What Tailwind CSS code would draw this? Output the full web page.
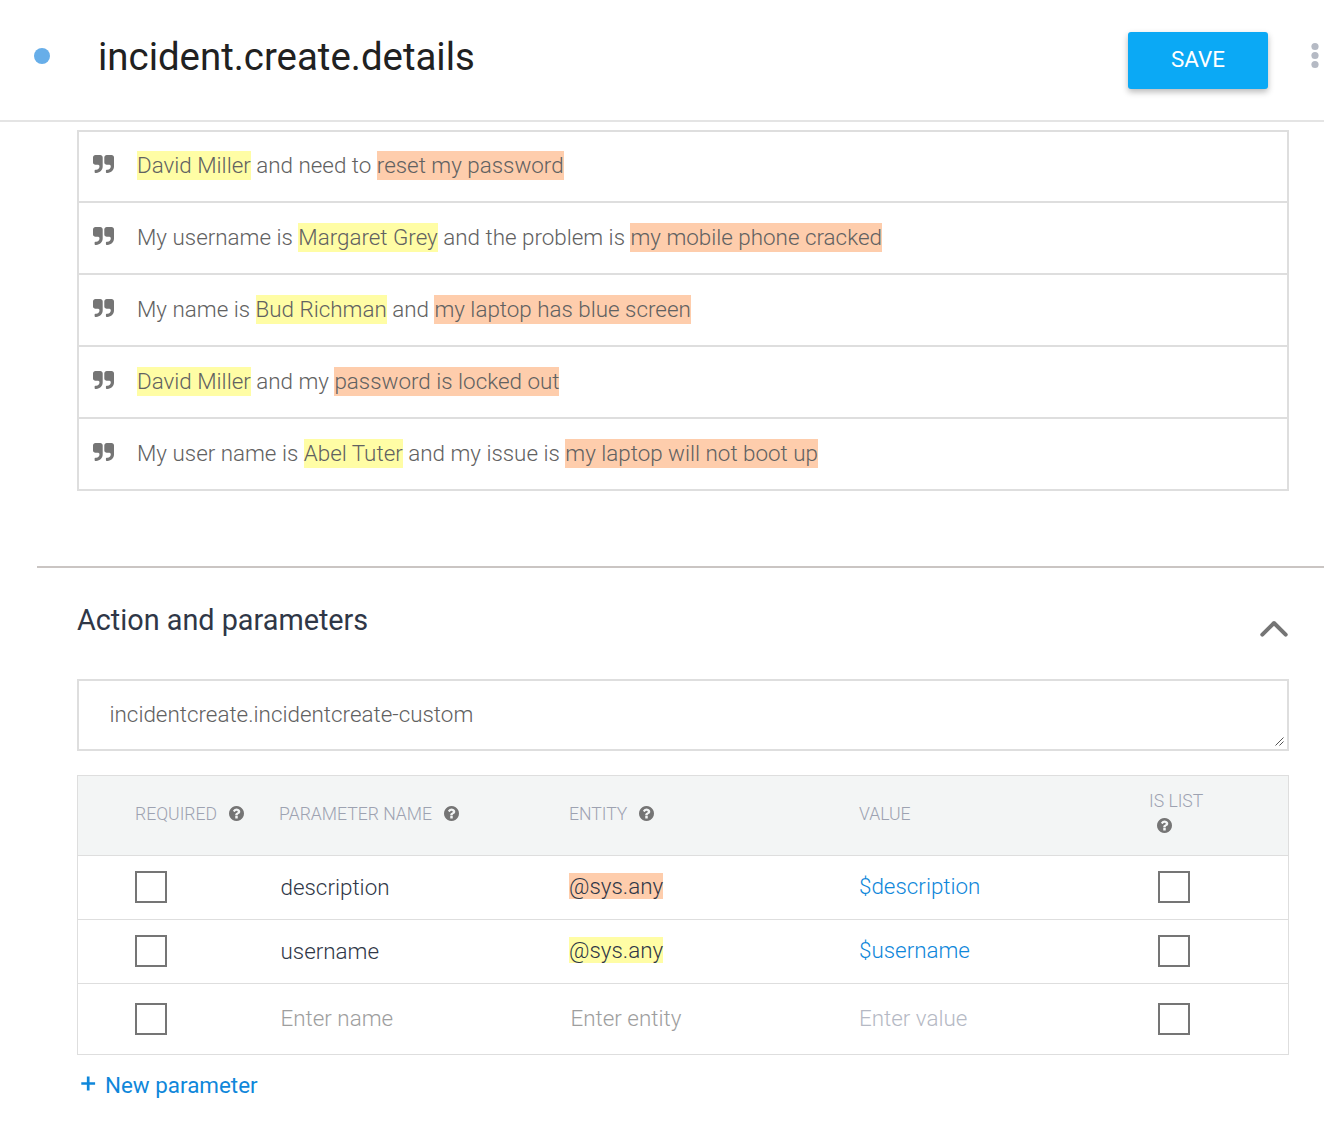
<!DOCTYPE html>
<html lang="en">
<head>
<meta charset="utf-8">
<title>incident.create.details</title>
<script src="https://cdn.jsdelivr.net/npm/@tailwindcss/browser@4"></script>
</head>
<body class="bg-white font-['Roboto',sans-serif] text-[22.4px] leading-[26px] font-light text-[#616161] h-[1122px] overflow-hidden">
<svg class="hidden">
  <symbol id="quote" viewBox="64 128 1664 1408"><path d="M832 320v704q0 104-40.500 198.500t-109.500 163.500-163.500 109.500-198.500 40.500h-64q-26 0-45-19t-19-45v-128q0-26 19-45t45-19h64q106 0 181-75t75-181v-32q0-40-28-68t-68-28h-224q-80 0-136-56t-56-136v-384q0-80 56-136t136-56h384q80 0 136 56t56 136zm896 0v704q0 104-40.500 198.500t-109.500 163.500-163.500 109.500-198.500 40.500h-64q-26 0-45-19t-19-45v-128q0-26 19-45t45-19h64q106 0 181-75t75-181v-32q0-40-28-68t-68-28h-224q-80 0-136-56t-56-136v-384q0-80 56-136t136-56h384q80 0 136 56t56 136z"/></symbol>
  <symbol id="help" viewBox="128 128 1536 1536"><path d="M1024 1376v-192q0-14-9-23t-23-9h-192q-14 0-23 9t-9 23v192q0 14 9 23t23 9h192q14 0 23-9t9-23zm256-672q0-88-55.500-163t-138.500-116-170.500-41q-243 0-371 213-15 24 8 42l132 100q7 6 19 6 16 0 25-12 53-68 86-92 34-24 86-24 48 0 85.500 26t37.500 59q0 38-20 61t-68 45q-63 28-115.500 86.500t-52.500 125.500v36q0 14 9 23t23 9h192q14 0 23-9t9-23q0-19 21.500-49.500t54.500-49.500q32-18 49-28.500t46-35 44.500-48 28-60.500 12.500-81zm384 192q0 209-103 385.500t-279.500 279.500-385.500 103-385.500-103-279.500-279.500-103-385.500 103-385.500 279.500-279.500 385.500-103 385.500 103 279.500 279.500 103 385.500z"/></symbol>
</svg>

<header class="flex h-[122px] items-start border-b-2 border-[#e4e4e4]">
  <span class="ml-[34px] mt-12 size-4 rounded-full bg-[#67aee9]"></span>
  <h1 class="ml-12 mt-[33px] text-[38.4px] leading-[48px] font-normal text-[#212121]">incident.create.details</h1>
  <button class="ml-auto mt-8 h-[57px] w-[140px] rounded-[3px] bg-[#0ba9f5] pb-[3px] font-normal text-white shadow-[0_3px_6px_rgba(0,0,0,0.28)]">SAVE</button>
  <svg class="ml-[42px] mr-1 mt-[41px] h-[30px] w-[10px] shrink-0 fill-[#b5bac4]" viewBox="0 0 10 30"><circle cx="5" cy="5.500" r="3.600"/><circle cx="5" cy="14.500" r="3.600"/><circle cx="5" cy="23.500" r="3.600"/></svg>
</header>

<main>
  <ul class="ml-[77px] mt-2 w-[1212px] border-2 border-[#dedede]">
    <li class="flex h-[71px] items-start border-b-2 border-[#dedede] pt-[20px]"><svg class="ml-[14px] mt-[3px] h-[18px] w-[21px] fill-[#757575]"><use href="#quote"/></svg><p class="ml-[23px]"><mark class="bg-[#fffda5] pt-px pb-[2px] text-inherit">David Miller</mark> and need to <mark class="bg-[#fecdac] pt-px pb-[2px] text-inherit">reset my password</mark></p></li>
    <li class="flex h-[72px] items-start border-b-2 border-[#dedede] pt-[21px]"><svg class="ml-[14px] mt-[3px] h-[18px] w-[21px] fill-[#757575]"><use href="#quote"/></svg><p class="ml-[23px]">My username is <mark class="bg-[#fffda5] pt-px pb-[2px] text-inherit">Margaret Grey</mark> and the problem is <mark class="bg-[#fecdac] pt-px pb-[2px] text-inherit">my mobile phone cracked</mark></p></li>
    <li class="flex h-[72px] items-start border-b-2 border-[#dedede] pt-[21px]"><svg class="ml-[14px] mt-[3px] h-[18px] w-[21px] fill-[#757575]"><use href="#quote"/></svg><p class="ml-[23px]">My name is <mark class="bg-[#fffda5] pt-px pb-[2px] text-inherit">Bud Richman</mark> and <mark class="bg-[#fecdac] pt-px pb-[2px] text-inherit">my laptop has blue screen</mark></p></li>
    <li class="flex h-[72px] items-start border-b-2 border-[#dedede] pt-[21px]"><svg class="ml-[14px] mt-[3px] h-[18px] w-[21px] fill-[#757575]"><use href="#quote"/></svg><p class="ml-[23px]"><mark class="bg-[#fffda5] pt-px pb-[2px] text-inherit">David Miller</mark> and my <mark class="bg-[#fecdac] pt-px pb-[2px] text-inherit">password is locked out</mark></p></li>
    <li class="flex h-[70px] items-start pt-[21px]"><svg class="ml-[14px] mt-[3px] h-[18px] w-[21px] fill-[#757575]"><use href="#quote"/></svg><p class="ml-[23px]">My user name is <mark class="bg-[#fffda5] pt-px pb-[2px] text-inherit">Abel Tuter</mark> and my issue is <mark class="bg-[#fecdac] pt-px pb-[2px] text-inherit">my laptop will not boot up</mark></p></li>
  </ul>

  <section class="ml-[37px] mt-[75px] border-t-2 border-[#cac5c3] pl-10">
    <div class="flex h-[111px] w-[1212px] items-start justify-between">
      <h2 class="mt-[34px] text-[28.8px] leading-9 font-normal text-[#2f3747]">Action and parameters</h2>
      <svg class="mt-[50px] h-[22px] w-[30px] fill-none stroke-[#757575]" viewBox="0 0 30 22"><path d="M3.300 16.600 15 5l11.700 11.600" stroke-width="4" stroke-linecap="round" stroke-linejoin="round"/></svg>
    </div>
    <div class="flex h-[72px] w-[1212px] items-center justify-between border-2 border-[#dedede]">
      <p class="ml-[30.500px] pb-[2px]">incidentcreate.incidentcreate-custom</p>
      <svg class="mr-[3px] mb-[3px] size-[9px] self-end fill-none stroke-[#555]" viewBox="0 0 9 9"><path d="M.5 8.500l8-8M4.500 8.500l4-4" stroke-width="1"/></svg>
    </div>

    <div class="mt-6 w-[1212px] border border-[#dedede] text-[#2f3747]">
      <div class="grid h-20 grid-cols-[144px_290px_290px_290px_1fr] items-center border-b border-[#dedede] bg-[#f3f5f5] pb-[3px] pl-[57px] text-[17.6px] leading-6 text-[#9da2b1]">
        <div class="flex items-center gap-3">REQUIRED <svg class="mb-px size-[15px] fill-[#757575]"><use href="#help"/></svg></div>
        <div class="flex items-center gap-3">PARAMETER NAME <svg class="mb-px size-[15px] fill-[#757575]"><use href="#help"/></svg></div>
        <div class="flex items-center gap-3">ENTITY <svg class="mb-px size-[15px] fill-[#757575]"><use href="#help"/></svg></div>
        <div>VALUE</div>
        <div class="pb-[7px]">IS LIST<svg class="ml-2 mt-[5px] size-[15px] fill-[#757575]"><use href="#help"/></svg></div>
      </div>
      <div class="grid h-16 grid-cols-[144px_290px_290px_290px_1fr] items-center border-b border-[#dedede] pb-px pl-[57px]">
        <span class="size-8 border-2 border-[#757575]"></span>
        <span class="pl-[1.500px]">description</span>
        <span class="pb-[2px]"><mark class="bg-[#fecdac] text-inherit">@sys.any</mark></span>
        <span class="pb-[2px] text-[#0f87da]">$description</span>
        <span class="ml-[9px] size-8 border-2 border-[#757575]"></span>
      </div>
      <div class="grid h-16 grid-cols-[144px_290px_290px_290px_1fr] items-center border-b border-[#dedede] pb-px pl-[57px]">
        <span class="size-8 border-2 border-[#757575]"></span>
        <span class="pl-[1.500px]">username</span>
        <span class="pb-[2px]"><mark class="bg-[#fffda5] text-inherit">@sys.any</mark></span>
        <span class="pb-[2px] text-[#0f87da]">$username</span>
        <span class="ml-[9px] size-8 border-2 border-[#757575]"></span>
      </div>
      <div class="grid h-[70px] grid-cols-[144px_290px_290px_290px_1fr] items-center pl-[57px] text-[#9e9e9e]">
        <span class="size-8 border-2 border-[#757575]"></span>
        <span class="pb-[2px] pl-[1.500px]">Enter name</span>
        <span class="pb-[2px] pl-[1.500px]">Enter entity</span>
        <span class="pb-[2px] text-[#b5b9c4]">Enter value</span>
        <span class="ml-[9px] size-8 border-2 border-[#757575]"></span>
      </div>
    </div>
    <button class="mt-[17px] flex items-center font-normal text-[#0f87da]"><svg class="ml-1 mr-[9px] mb-[3px] size-[15px] fill-none stroke-current" viewBox="0 0 15 15"><path d="M7.200.5v14M.3 7.500h13.800" stroke-width="2.700"/></svg>New parameter</button>
  </section>
</main>
</body>
</html>
